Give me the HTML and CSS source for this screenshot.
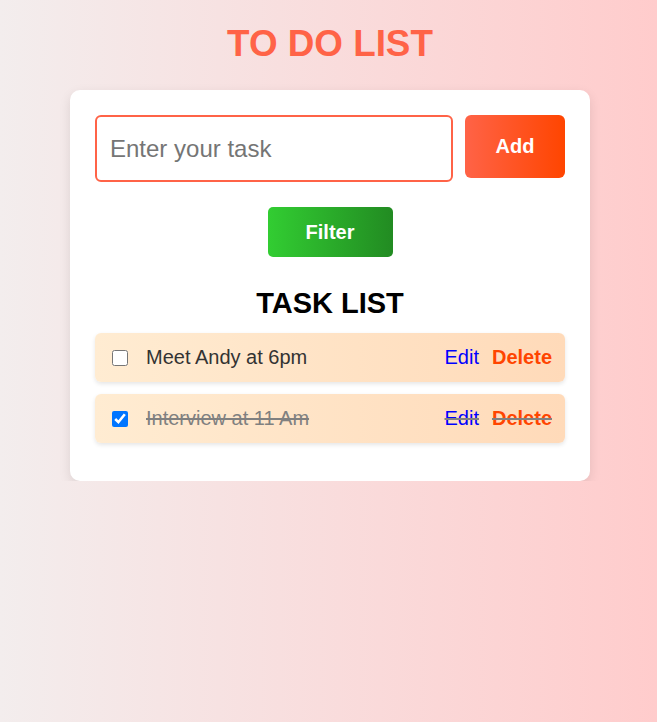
FILE: index.html
```html
<!DOCTYPE html>
<html lang="en">
<head>
<meta charset="utf-8">
<title>To Do List</title>
<link rel="stylesheet" href="styles.css">
</head>
<body>
  <h1 class="title">TO DO LIST</h1>
  <div class="card">
    <div class="entry">
      <input class="task-input" type="text" placeholder="Enter your task">
      <button class="add-btn">Add</button>
    </div>
    <div class="filter-row">
      <button class="filter-btn">Filter</button>
    </div>
    <h2 class="list-title">TASK LIST</h2>
    <ul class="tasks">
      <li class="task">
        <input class="check" type="checkbox">
        <span class="task-text">Meet Andy at 6pm</span>
        <span class="edit">Edit</span>
        <span class="delete">Delete</span>
      </li>
      <li class="task done">
        <input class="check" type="checkbox" checked>
        <span class="task-text">Interview at 11 Am</span>
        <span class="edit">Edit</span>
        <span class="delete">Delete</span>
      </li>
    </ul>
  </div>
</body>
</html>
```
FILE: styles.css
```css
html {
  background: linear-gradient(to right, #f3eded, #ffcccc);
  min-height: 100%;
}
body {
  margin: 0;
  padding-left: 3px;
  font-family: "Liberation Sans", Arial, sans-serif;
}
.title {
  margin: 23px 0 25px;
  text-align: center;
  color: #ff6347;
  font-size: 36.8px;
  font-weight: bold;
  line-height: normal;
}
.card {
  box-sizing: border-box;
  width: 520px;
  margin: 0 auto;
  padding: 25px 25px 26px;
  background: #fff;
  border-radius: 10px;
  box-shadow: 0 4px 12px rgba(0, 0, 0, 0.1);
}
.entry {
  display: flex;
  align-items: flex-start;
  gap: 12px;
}
.task-input {
  flex: 1;
  min-width: 0;
  box-sizing: border-box;
  height: 67px;
  padding: 0 13px;
  border: 2px solid #ff6347;
  border-radius: 6px;
  font-family: "Liberation Sans", Arial, sans-serif;
  font-size: 24px;
  color: #333;
  outline: none;
}
.task-input::placeholder {
  color: #757575;
}
.add-btn {
  width: 100px;
  height: 63px;
  border: none;
  border-radius: 6px;
  background: linear-gradient(to right, #ff6347, #ff4500);
  color: #fff;
  font-family: "Liberation Sans", Arial, sans-serif;
  font-size: 20px;
  font-weight: bold;
}
.filter-row {
  display: flex;
  justify-content: center;
  margin-top: 25px;
}
.filter-btn {
  width: 125px;
  height: 50px;
  border: none;
  border-radius: 5px;
  background: linear-gradient(to right, #32cd32, #228b22);
  color: #fff;
  font-family: "Liberation Sans", Arial, sans-serif;
  font-size: 20px;
  font-weight: bold;
}
.list-title {
  margin: 30px 0 13px;
  text-align: center;
  font-size: 29px;
  font-weight: bold;
  color: #000;
  line-height: normal;
}
.tasks {
  list-style: none;
  margin: 0;
  padding: 0;
}
.task {
  display: flex;
  align-items: center;
  height: 49px;
  box-sizing: border-box;
  padding: 0 13px 0 17px;
  margin-bottom: 12px;
  border-radius: 6px;
  background: linear-gradient(to right, #ffecd2, #ffdab9);
  box-shadow: 0 2px 4px rgba(0, 0, 0, 0.1);
  font-size: 20px;
  color: #333;
}
.check {
  width: 16px;
  height: 16px;
  margin: 0 18px 0 0;
}
.task-text {
  flex: 1;
}
.edit {
  color: #0000ff;
  margin-right: 13px;
}
.delete {
  color: #ff4500;
  font-weight: bold;
}
.done {
  text-decoration: line-through;
  color: #808080;
}
```
